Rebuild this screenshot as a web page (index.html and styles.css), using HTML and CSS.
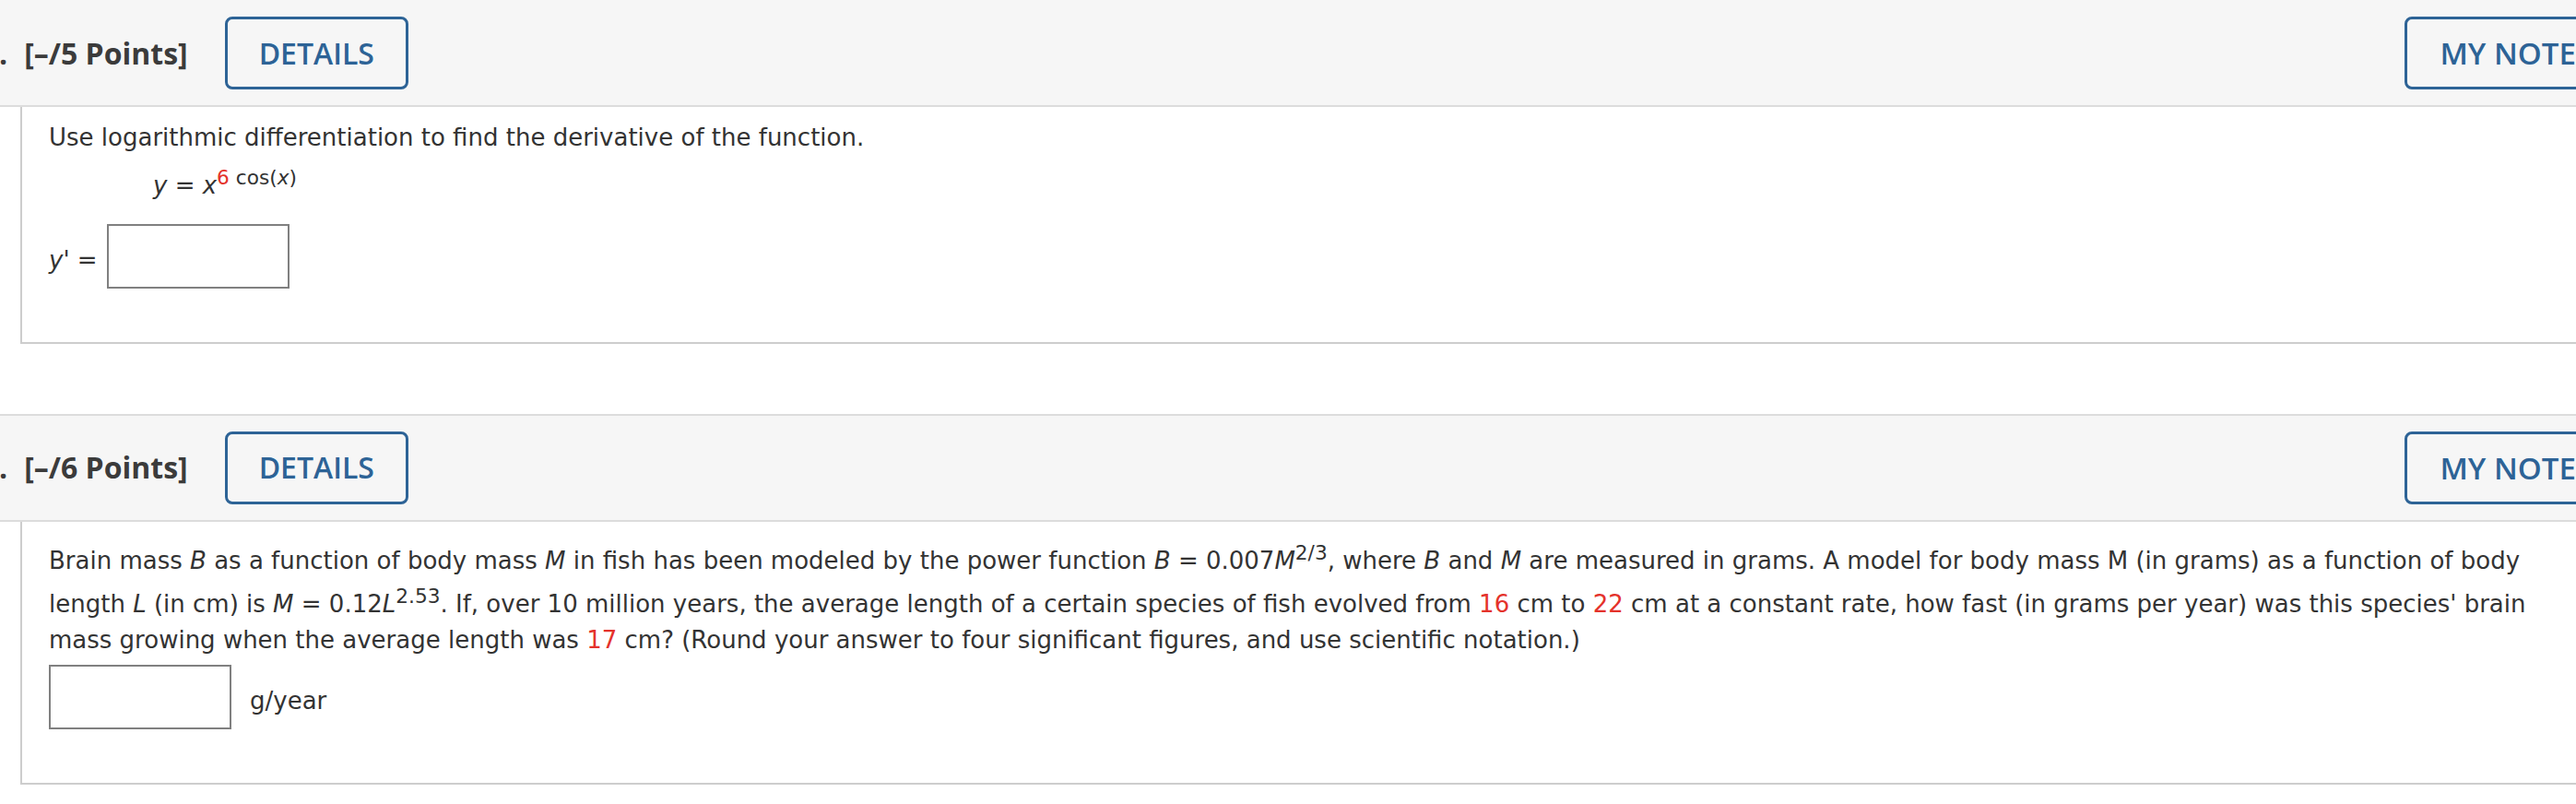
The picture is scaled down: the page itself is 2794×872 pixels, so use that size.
FILE: index.html
```html
<!DOCTYPE html>
<html lang="en">
<head>
<meta charset="utf-8">
<title>Questions</title>
<link rel="stylesheet" href="styles.css">
</head>
<body>
<div class="page">
  <section class="question">
    <div class="qhead">
      <span class="qnum">.</span>
      <span class="qpts">[–/5 Points]</span>
      <button class="btn" type="button">DETAILS</button>
      <button class="btn btn-notes" type="button">MY NOTES</button>
    </div>
    <div class="qbody">
      <p class="prompt">Use logarithmic differentiation to find the derivative of the function.</p>
      <p class="equation"><i>y</i> = <i>x</i><sup><span class="red">6</span> cos(<i>x</i>)</sup></p>
      <div class="answer answer-1">
        <span class="label"><i>y'</i> =</span>
        <input class="ans-input" type="text">
      </div>
    </div>
  </section>

  <section class="question">
    <div class="qhead">
      <span class="qnum">.</span>
      <span class="qpts">[–/6 Points]</span>
      <button class="btn" type="button">DETAILS</button>
      <button class="btn btn-notes" type="button">MY NOTES</button>
    </div>
    <div class="qbody">
      <p class="prompt">Brain mass <i>B</i> as a function of body mass <i>M</i> in fish has been modeled by the power function <i>B</i> = 0.007<i>M</i><sup>2/3</sup>, where <i>B</i> and <i>M</i> are measured in grams. A model for body mass M (in grams) as a function of body length <i>L</i> (in cm) is <i>M</i> = 0.12<i>L</i><sup>2.53</sup>. If, over 10 million years, the average length of a certain species of fish evolved from <span class="red">16</span> cm to <span class="red">22</span> cm at a constant rate, how fast (in grams per year) was this species' brain mass growing when the average length was <span class="red">17</span> cm? (Round your answer to four significant figures, and use scientific notation.)</p>
      <div class="answer answer-2">
        <input class="ans-input" type="text">
        <span class="label">g/year</span>
      </div>
    </div>
  </section>
</div>
</body>
</html>
```
FILE: styles.css
```css
html, body {
  margin: 0;
  padding: 0;
  overflow: hidden;
  background: #ffffff;
}

body {
  font-family: "DejaVu Sans", Verdana, sans-serif;
  color: #333333;
}

.page {
  width: 2880px;
  margin-top: -2px;
}

.question + .question {
  margin-top: 76px;
}

.qhead {
  display: flex;
  align-items: center;
  background: #f6f6f6;
  border-top: 2px solid #dcdcdc;
  border-bottom: 2px solid #dcdcdc;
  padding: 17px 30px 17px 0;
  font-family: "Open Sans", "Liberation Sans", sans-serif;
}

.question:first-child .qhead {
  padding-top: 18px;
}

.qnum,
.qpts {
  font-weight: 700;
  font-size: 32px;
  color: #3b3b3b;
  line-height: 1;
}

.qnum {
  margin-left: -1px;
}

.qpts {
  margin-left: 18px;
}

.btn {
  box-sizing: border-box;
  height: 79px;
  margin: 0 0 0 40px;
  padding: 0 34px;
  border: 3px solid #2d6396;
  border-radius: 8px;
  background: transparent;
  color: #2d6396;
  font-family: "Open Sans", "Liberation Sans", sans-serif;
  font-weight: 600;
  font-size: 32px;
  line-height: 1;
}

.btn-notes {
  margin-left: auto;
  padding: 0 35px;
  font-size: 33px;
}

.qbody {
  margin-left: 22px;
  border-left: 2px solid #cdcdcd;
  border-bottom: 2px solid #cdcdcd;
  padding: 14px 110px 58px 29px;
  font-size: 26px;
  line-height: 39px;
}

.qbody p {
  margin: 0;
}

sup {
  font-size: smaller;
  vertical-align: super;
}

.red {
  color: #e4322b;
}

.equation {
  margin-top: 4px !important;
  padding-left: 113px;
}

.answer {
  display: flex;
  align-items: center;
}

.answer-1 {
  margin-top: 22px;
  gap: 10px;
}

.answer-2 {
  margin-top: 7px;
  gap: 20px;
}

.label {
  padding-top: 9px;
}

.ans-input {
  box-sizing: border-box;
  width: 198px;
  height: 70px;
  margin: 0;
  padding: 0;
  border: 2px solid #808080;
  border-radius: 0;
  background: #ffffff;
  font: inherit;
}
```
